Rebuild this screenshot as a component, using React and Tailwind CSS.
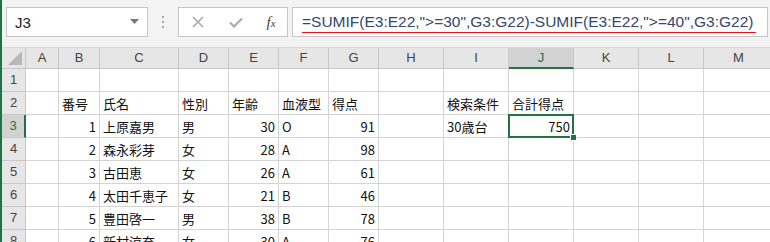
import React from 'react';

const cols = ['A', 'B', 'C', 'D', 'E', 'F', 'G', 'H', 'I', 'J', 'K', 'L', 'M'];

// each row: [A, B, C, D, E, F, G, H, I, J]
const rows = [
  [],
  ['', '番号', '氏名', '性別', '年齢', '血液型', '得点', '', '検索条件', '合計得点'],
  ['', 1, '上原嘉男', '男', 30, 'O', 91, '', '30歳台', 750],
  ['', 2, '森永彩芽', '女', 28, 'A', 98],
  ['', 3, '古田恵', '女', 26, 'A', 61],
  ['', 4, '太田千恵子', '女', 21, 'B', 46],
  ['', 5, '豊田啓一', '男', 38, 'B', 78],
  ['', 6, '新村涼奈', '女', 30, 'A', 76],
];

const font = { fontFamily: '"Noto Sans CJK JP", "Noto Sans", sans-serif' };

function Cell({ value, rowIdx, colIdx }) {
  const isNum = typeof value === 'number';
  const selected = rowIdx === 3 && colIdx === 9;
  return (
    <div
      className={`relative h-[23px] border-r border-b border-[#d4d4d4] bg-white flex items-center overflow-visible whitespace-nowrap text-[13px] text-[#111] px-[3px] ${isNum ? 'justify-end' : 'justify-start'} ${selected ? 'z-10' : ''}`}
    >
      {value !== undefined && value !== '' ? <span className="leading-none">{value}</span> : null}
      {selected && (
        <>
          <div className="absolute -left-[1px] -top-[1px] -right-[1px] -bottom-[1px] border-2 border-[#217346] pointer-events-none" />
          <div className="absolute -right-[4px] -bottom-[4px] w-[7px] h-[7px] bg-[#217346] border border-white" />
        </>
      )}
    </div>
  );
}

export default function App() {
  return (
    <div className="w-[770px] h-[242px] overflow-hidden bg-[#f3f3f3] border-l-2 border-[#217346]" style={font}>
      {/* Formula bar */}
      <div className="h-[48px] flex items-start pt-[7px] pl-[4px] pr-[2px] border-b border-[#d9d9d9]">
        <div className="w-[142px] h-[30px] bg-white border border-[#c6c6c6] flex items-center justify-between pl-[8px] pr-[8px]">
          <span className="text-[15px] text-[#222] pt-[2px]" style={{ fontFamily: '"Liberation Sans", sans-serif' }}>J3</span>
          <svg width="9" height="6" viewBox="0 0 9 6"><path d="M0 0h9L4.5 5z" fill="#777" /></svg>
        </div>
        <div className="w-[30px] h-[30px] flex flex-col items-center justify-center gap-[3px]">
          <div className="w-[2px] h-[2px] bg-[#a8a8a8]" />
          <div className="w-[2px] h-[2px] bg-[#a8a8a8]" />
          <div className="w-[2px] h-[2px] bg-[#a8a8a8]" />
        </div>
        <div className="w-[110px] h-[30px] bg-white border border-[#c6c6c6] flex items-center">
          <div className="w-[38px] flex justify-center">
            <svg width="12" height="12" viewBox="0 0 12 12"><path d="M1 1l10 10M11 1L1 11" stroke="#aaa" strokeWidth="1.6" /></svg>
          </div>
          <div className="w-[38px] flex justify-center">
            <svg width="14" height="11" viewBox="0 0 14 11"><path d="M1 5.5l4 4L13 1.5" stroke="#aaa" strokeWidth="2.2" fill="none" /></svg>
          </div>
          <div className="w-[32px] flex justify-center">
            <span className="italic text-[15px] text-[#444] leading-none" style={{ fontFamily: '"Liberation Serif", serif' }}>f<span className="text-[11px]">x</span></span>
          </div>
        </div>
        <div className="ml-[4px] w-[476px] h-[30px] bg-white border border-[#c6c6c6] flex items-center pl-[9px]">
          <span
            className="text-[15.5px] text-[#34476b] leading-none border-b-[1.5px] border-[#e8141c] pb-[2px] pr-[3px] pt-[3px] whitespace-nowrap"
            style={{ fontFamily: '"Liberation Sans", sans-serif' }}
          >
            =SUMIF(E3:E22,"&gt;=30",G3:G22)-SUMIF(E3:E22,"&gt;=40",G3:G22)
          </span>
        </div>
      </div>

      {/* Sheet grid */}
      <div className="grid grid-cols-[24px_33px_41px_79px_50px_50px_50px_50px_65px_65px_65px_65px_65px_70px] bg-white">
        {/* header row */}
        <div className="h-[21px] bg-[#e6e6e6] border-r border-b border-[#c8c8c8] relative">
          <svg className="absolute right-[3px] bottom-[3px]" width="14" height="14" viewBox="0 0 14 14"><path d="M14 0V14H0z" fill="#b7b7b7" /></svg>
        </div>
        {cols.map((c) => (
          <div
            key={c}
            className={`h-[21px] flex items-center justify-center text-[13px] border-r ${c === 'J' ? 'bg-[#d2d2d2] text-[#217346] border-b-2 border-b-[#217346] border-r-[#c8c8c8]' : 'bg-[#e6e6e6] text-[#444] border-b border-[#c8c8c8]'}`}
            style={{ fontFamily: '"Liberation Sans", sans-serif' }}
          >
            {c}
          </div>
        ))}

        {rows.map((r, i) => {
          const rowNum = i + 1;
          return (
            <React.Fragment key={rowNum}>
              <div
                className={`h-[23px] flex items-center justify-center text-[13px] border-b border-[#c8c8c8] ${rowNum === 3 ? 'bg-[#d2d2d2] text-[#217346] border-r-2 border-r-[#217346]' : 'bg-[#e6e6e6] text-[#444] border-r'}`}
                style={{ fontFamily: '"Liberation Sans", sans-serif' }}
              >
                {rowNum}
              </div>
              {cols.map((c, j) => (
                <Cell key={c} value={r[j]} rowIdx={rowNum} colIdx={j} />
              ))}
            </React.Fragment>
          );
        })}
      </div>
    </div>
  );
}
